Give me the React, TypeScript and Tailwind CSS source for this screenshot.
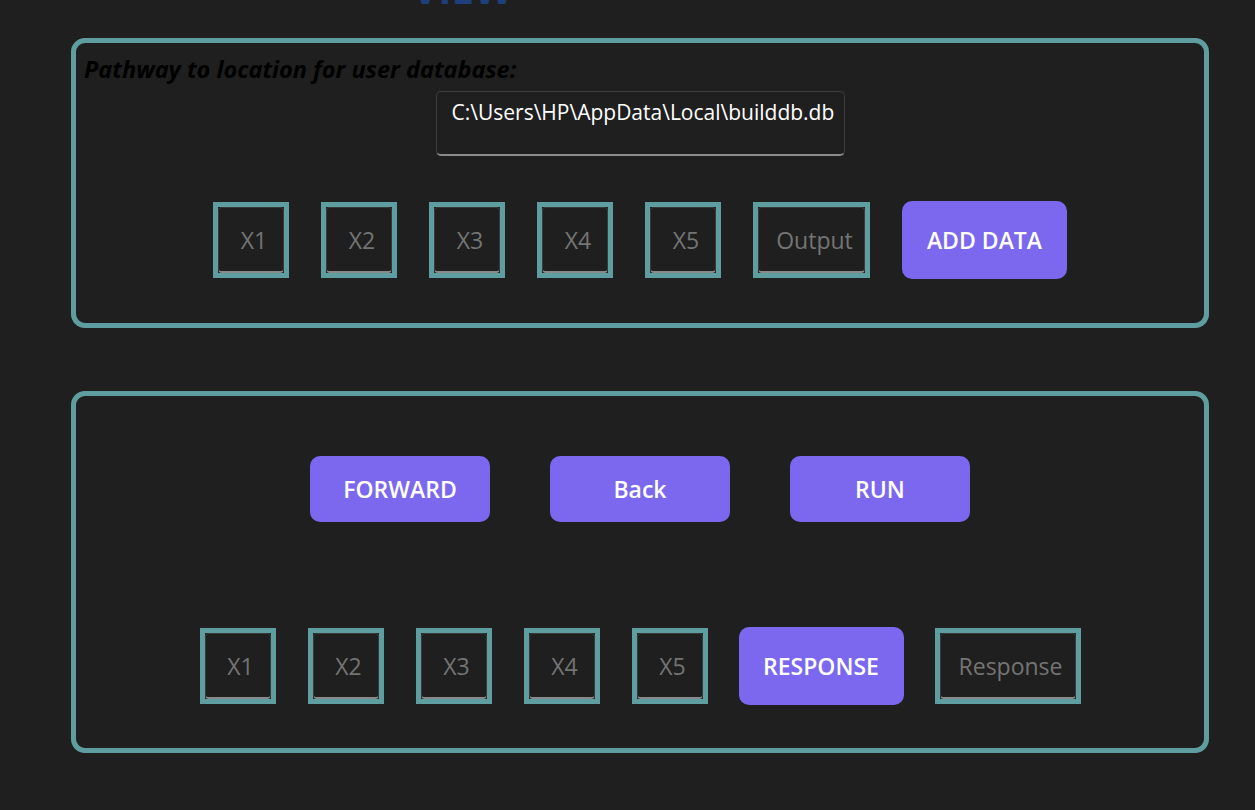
const font = { fontFamily: '"Open Sans", "Noto Sans", sans-serif' };

type BoxProps = {
  label: string;
  width?: string;
};

const FieldBox = ({ label, width = "w-[76px]" }: BoxProps) => {
  return (
    <div className={`${width} h-[76px] border-[5px] border-[#5f9ea0] bg-[#1f1f1f]`}>
      <input
        readOnly
        placeholder={label}
        className="w-full h-full bg-[#1f1f1f] rounded-[4px] border border-[#3a3a3a] border-b-2 border-b-[#8a8a8a] text-center pl-[6px] text-[23px] text-white placeholder:text-[#747474] outline-none"
        style={font}
      />
    </div>
  );
};

type BtnProps = {
  label: string;
  className: string;
};

const PurpleButton = ({ label, className }: BtnProps) => {
  return (
    <button
      className={`${className} bg-[#7b68ee] text-white text-[23px] font-semibold rounded-[10px] flex items-center justify-center`}
      style={font}
    >
      {label}
    </button>
  );
};

export default function App() {
  return (
    <div className="min-h-[810px] w-full bg-[#1f1f1f] overflow-hidden" style={font}>
      <h1 className="-mt-[30px] h-[68px] text-center text-[40px] font-bold text-[#1e3f7a] leading-[38px] pr-[330px]">
        VIEW
      </h1>

      <div className="ml-[71px] w-[1138px] h-[290px] border-[5px] border-[#5f9ea0] rounded-[14px] flex flex-col">
        <p className="pl-[8px] pt-[11px] text-[23.5px] font-bold italic text-black leading-[30px]">
          Pathway to location for user database:
        </p>
        <div className="flex justify-center">
          <div className="w-[409px] h-[65px] mt-[7px] rounded-[5px] border border-[#3c3c3c] border-b-2 border-b-[#8a8a8a] pl-[15px] pt-[5px] text-[21px] text-white leading-[30px] whitespace-nowrap">
            C:\Users\HP\AppData\Local\builddb.db
          </div>
        </div>
        <div className="flex justify-center items-center gap-[32px] mt-[45px]">
          <FieldBox label="X1" />
          <FieldBox label="X2" />
          <FieldBox label="X3" />
          <FieldBox label="X4" />
          <FieldBox label="X5" />
          <FieldBox label="Output" width="w-[117px]" />
          <PurpleButton label="ADD DATA" className="w-[165px] h-[78px]" />
        </div>
      </div>

      <div className="ml-[71px] mt-[63px] w-[1138px] h-[362px] border-[5px] border-[#5f9ea0] rounded-[14px] flex flex-col">
        <div className="flex justify-center gap-[60px] mt-[60px]">
          <PurpleButton label="FORWARD" className="w-[180px] h-[66px]" />
          <PurpleButton label="Back" className="w-[180px] h-[66px]" />
          <PurpleButton label="RUN" className="w-[180px] h-[66px]" />
        </div>
        <div className="flex justify-center items-center gap-[32px] mt-[105px]">
          <FieldBox label="X1" />
          <FieldBox label="X2" />
          <FieldBox label="X3" />
          <FieldBox label="X4" />
          <FieldBox label="X5" />
          <PurpleButton label="RESPONSE" className="w-[165px] h-[78px] -ml-px" />
          <div className="-ml-px">
            <FieldBox label="Response" width="w-[146px]" />
          </div>
        </div>
      </div>
    </div>
  );
}
